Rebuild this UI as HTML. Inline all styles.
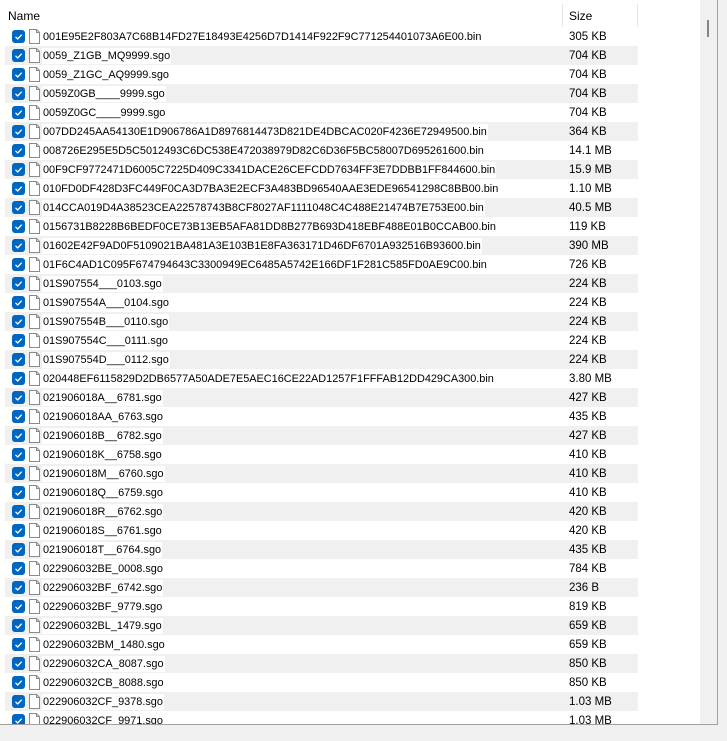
<!DOCTYPE html><html><head><style>
body{margin:0;width:727px;height:741px;background:#f0f0f0;position:relative;overflow:hidden;font-family:"Liberation Sans",sans-serif;font-size:12px;color:#000}
#box{position:absolute;left:0;top:0;width:717px;height:724px;background:#fff;border-right:1px solid #a0a0a0;border-bottom:1px solid #a0a0a0;overflow:hidden}
.hdr{position:absolute;top:0;left:0;width:700px;height:27px;background:#fff}
.hdr span{position:absolute;top:9px}
.div{position:absolute;top:4px;width:1px;height:23px;background:#e5e5e5}
.sb{position:absolute;left:700px;top:0;width:17px;height:724px;background:#f0f0f0}
.thumb{position:absolute;left:707px;top:20px;width:2px;height:17px;background:#858585}
.row{position:absolute;left:5px;width:633px;height:19px}
.row.s{background:#f0f0f0}
.cb{position:absolute;left:7px;top:3px;width:13px;height:13px;background:#0067c0;border-radius:3px}
.cb svg{position:absolute;left:0;top:0}
.fi{position:absolute;left:24px;top:2px;width:11px;height:15px}
.nm{position:absolute;left:37px;top:2px;padding:1px 1px 0;background:#fff;line-height:15px;font-size:10.9px}
.sz{position:absolute;left:564px;top:3px;line-height:15px;font-size:11.5px}
</style></head><body><div id="box">
<div class="hdr"><span style="left:8px">Name</span><span style="left:569px">Size</span><div class="div" style="left:562px"></div><div class="div" style="left:637px"></div></div>
<div id="rows"></div>
<div class="sb"></div><div class="thumb"></div>
</div>
<script>
var d=[["001E95E2F803A7C68B14FD27E18493E4256D7D1414F922F9C771254401073A6E00.bin","305 KB"],["0059_Z1GB_MQ9999.sgo","704 KB"],["0059_Z1GC_AQ9999.sgo","704 KB"],["0059Z0GB____9999.sgo","704 KB"],["0059Z0GC____9999.sgo","704 KB"],["007DD245AA54130E1D906786A1D8976814473D821DE4DBCAC020F4236E72949500.bin","364 KB"],["008726E295E5D5C5012493C6DC538E472038979D82C6D36F5BC58007D695261600.bin","14.1 MB"],["00F9CF9772471D6005C7225D409C3341DACE26CEFCDD7634FF3E7DDBB1FF844600.bin","15.9 MB"],["010FD0DF428D3FC449F0CA3D7BA3E2ECF3A483BD96540AAE3EDE96541298C8BB00.bin","1.10 MB"],["014CCA019D4A38523CEA22578743B8CF8027AF1111048C4C488E21474B7E753E00.bin","40.5 MB"],["0156731B8228B6BEDF0CE73B13EB5AFA81DD8B277B693D418EBF488E01B0CCAB00.bin","119 KB"],["01602E42F9AD0F5109021BA481A3E103B1E8FA363171D46DF6701A932516B93600.bin","390 MB"],["01F6C4AD1C095F674794643C3300949EC6485A5742E166DF1F281C585FD0AE9C00.bin","726 KB"],["01S907554___0103.sgo","224 KB"],["01S907554A___0104.sgo","224 KB"],["01S907554B___0110.sgo","224 KB"],["01S907554C___0111.sgo","224 KB"],["01S907554D___0112.sgo","224 KB"],["020448EF6115829D2DB6577A50ADE7E5AEC16CE22AD1257F1FFFAB12DD429CA300.bin","3.80 MB"],["021906018A__6781.sgo","427 KB"],["021906018AA_6763.sgo","435 KB"],["021906018B__6782.sgo","427 KB"],["021906018K__6758.sgo","410 KB"],["021906018M__6760.sgo","410 KB"],["021906018Q__6759.sgo","410 KB"],["021906018R__6762.sgo","420 KB"],["021906018S__6761.sgo","420 KB"],["021906018T__6764.sgo","435 KB"],["022906032BE_0008.sgo","784 KB"],["022906032BF_6742.sgo","236 B"],["022906032BF_9779.sgo","819 KB"],["022906032BL_1479.sgo","659 KB"],["022906032BM_1480.sgo","659 KB"],["022906032CA_8087.sgo","850 KB"],["022906032CB_8088.sgo","850 KB"],["022906032CF_9378.sgo","1.03 MB"],["022906032CF_9971.sgo","1.03 MB"]];
var h="";d.forEach(function(r,i){h+='<div class="row'+(i%2?' s':'')+'" style="top:'+(27+i*19)+'px"><div class="cb"><svg width="13" height="13"><path d="M3.5 6.8l2.2 2.2 4-4.3" stroke="#fff" stroke-width="1.3" fill="none"/></svg></div><svg class="fi" width="11" height="15"><path d="M0.5 0.5h7l3 3v11h-10z" fill="#fff" stroke="#8a8a8a"/><path d="M7.5 0.5v3h3" fill="none" stroke="#8a8a8a"/></svg><span class="nm">'+r[0]+'</span><span class="sz">'+r[1]+'</span></div>'});
document.getElementById("rows").innerHTML=h;
</script></body></html>
